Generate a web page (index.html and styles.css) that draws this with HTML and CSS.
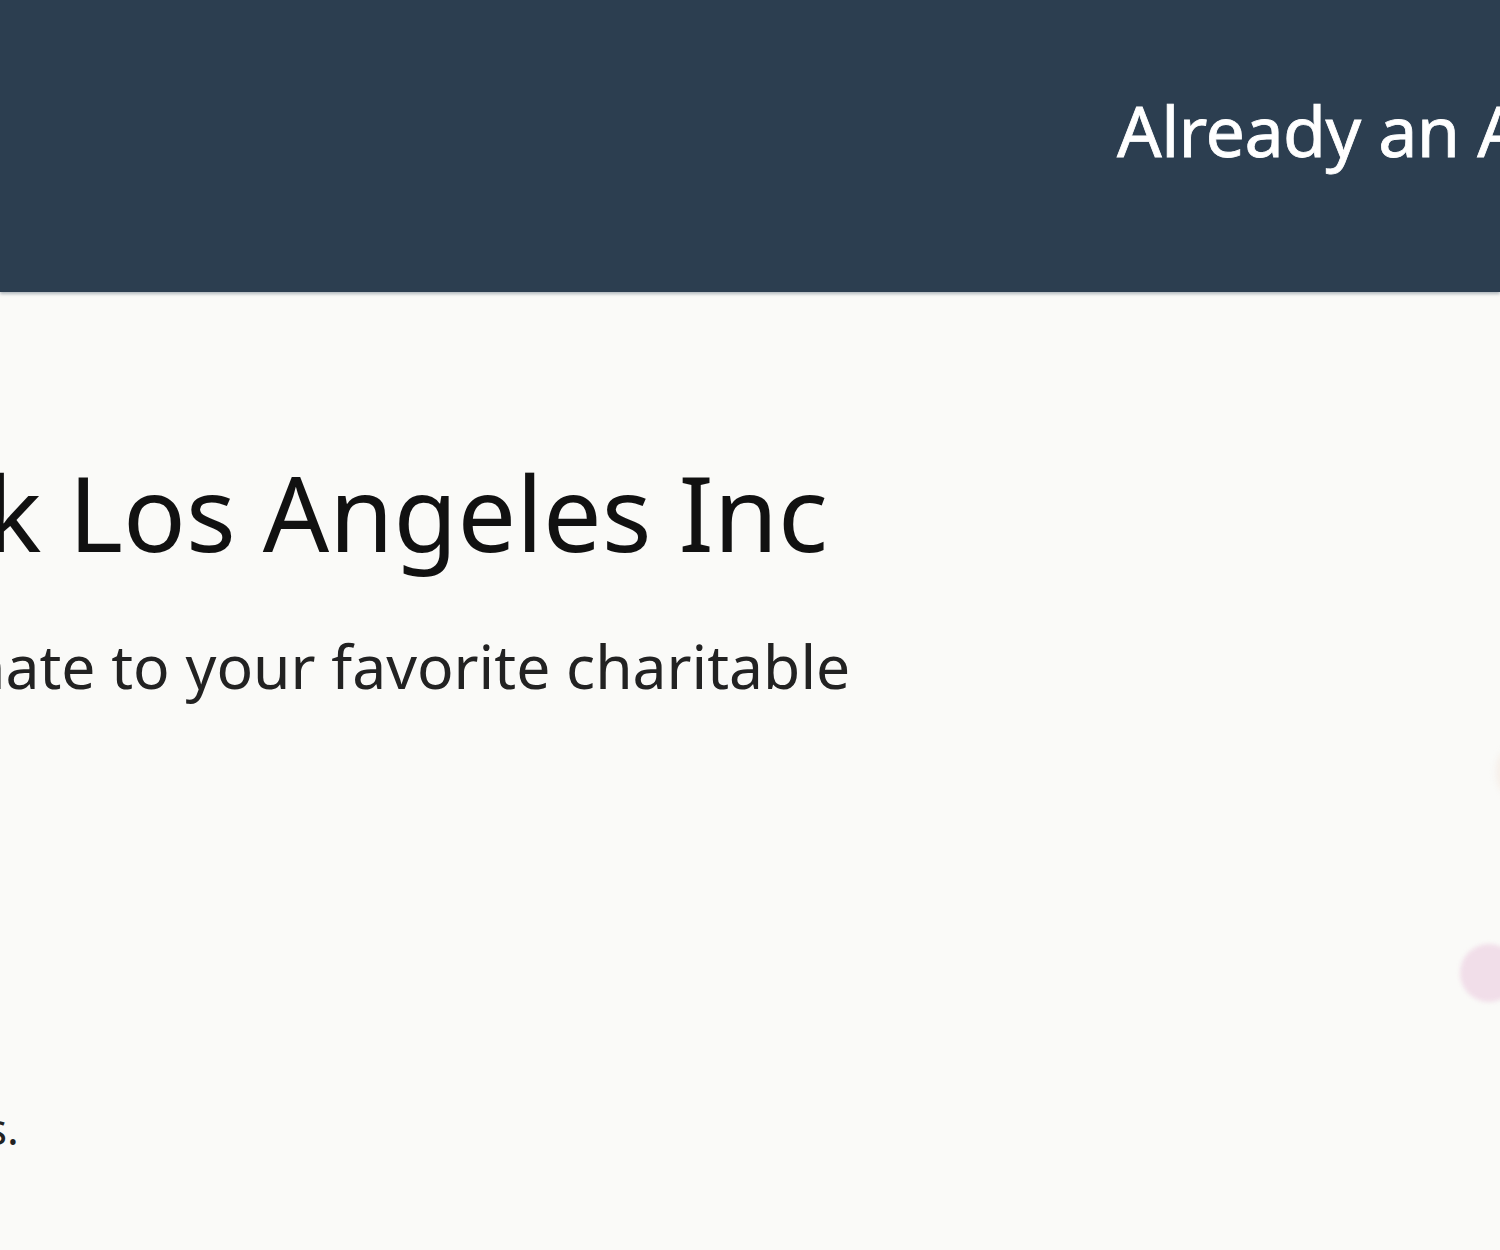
FILE: index.html
```html
<!DOCTYPE html>
<html>
<head>
<meta charset="utf-8">
<link rel="stylesheet" href="styles.css">
</head>
<body>
<header class="top">
  <div class="signin">Already an Amazon customer? Sign in</div>
</header>
<main class="content">
  <div class="left">
    <h1 class="title">k Los Angeles Inc</h1>
    <p class="sub">nate to your favorite charitable</p>
    <p class="note">s.</p>
  </div>
  <div class="art">
    <span class="dot dot-a"></span>
    <span class="dot dot-b"></span>
  </div>
</main>
</body>
</html>
```
FILE: styles.css
```css
html, body {
  margin: 0;
  padding: 0;
  width: 1500px;
  height: 1250px;
  overflow: hidden;
  background: #fafaf8;
  font-family: "Noto Sans", "Open Sans", sans-serif;
}
.top {
  height: 292px;
  background: #2c3e50;
  display: flex;
  justify-content: flex-start;
  box-shadow: 0 2px 3px rgba(40, 60, 80, 0.35);
  position: relative;
  z-index: 1;
}
.signin {
  color: #ffffff;
  font-size: 70px;
  letter-spacing: -0.6px;
  white-space: nowrap;
  margin-left: 1117px;
  padding-top: 95px;
  line-height: 1;
  -webkit-text-stroke: 0.8px #ffffff;
}
.content {
  display: flex;
  height: 958px;
  overflow: hidden;
}
.left {
  flex: 1;
  margin-left: -14px;
}
.title {
  margin: 168px 0 0 0;
  font-weight: 400;
  font-size: 104px;
  line-height: 1;
  color: #111111;
  white-space: nowrap;
}
.sub {
  margin: 72px 0 0 -18px;
  font-size: 60.6px;
  line-height: 1;
  color: #222222;
  white-space: nowrap;
}
.note {
  margin: 409px 0 0 0;
  font-size: 44px;
  line-height: 1;
  color: #222222;
}
.art {
  width: 60px;
  position: relative;
}
.dot {
  position: absolute;
  border-radius: 50%;
}
.dot-a {
  left: 20px;
  top: 652px;
  width: 58px;
  height: 58px;
  background: #f1dee9;
  filter: blur(2px);
}
.dot-b {
  left: 56px;
  top: 460px;
  width: 20px;
  height: 40px;
  background: #f6efe9;
  filter: blur(3px);
}
```
